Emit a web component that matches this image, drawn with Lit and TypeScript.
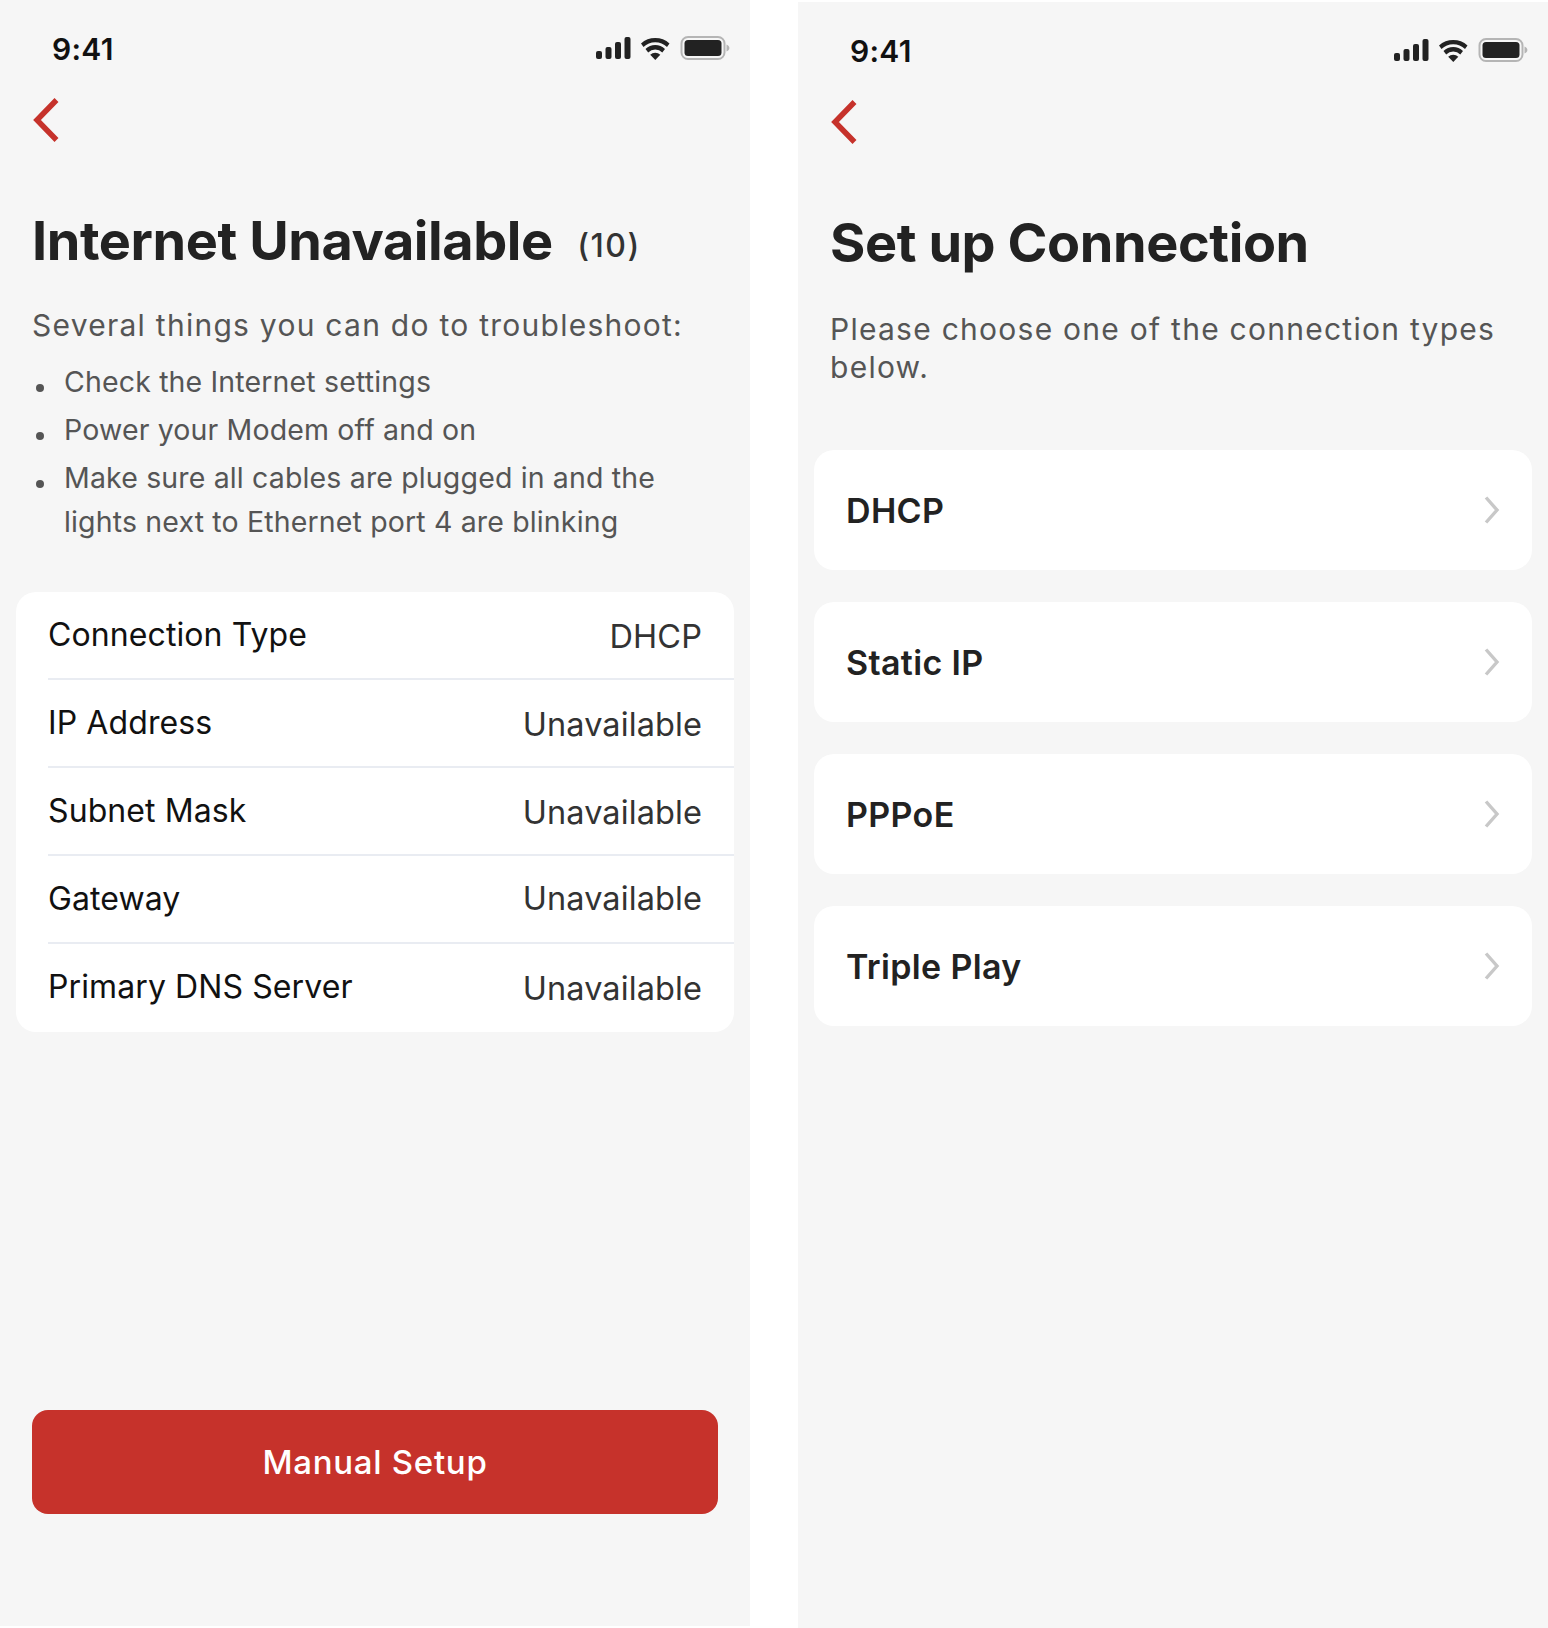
import { LitElement, html, css, svg } from "lit";
import { customElement } from "lit/decorators.js";

const statusIcons = html`
  <svg class="status-icons" width="134" height="26" viewBox="0 0 134 26">
    <g fill="#222">
      <rect x="0" y="15" width="6" height="8" rx="2"/>
      <rect x="9.5" y="11" width="6" height="12" rx="2"/>
      <rect x="19" y="6" width="6" height="17" rx="2"/>
      <rect x="28.5" y="1" width="6" height="22" rx="2"/>
      <path d="M45 7.5 A 21 21 0 0 1 73.5 7.5 L 71 11 A 17 17 0 0 0 47.5 11 Z"/>
      <path d="M49.5 13 A 14 14 0 0 1 69 13 L 66.3 16.4 A 10 10 0 0 0 52.2 16.4 Z"/>
      <path d="M54.2 18.8 A 7 7 0 0 1 64.3 18.8 L 59.3 24 Z"/>
    </g>
    <rect x="85.5" y="1" width="43" height="22" rx="6.5" fill="none" stroke="#b5b5b5" stroke-width="2"/>
    <rect x="88.5" y="4" width="37" height="16" rx="3.5" fill="#222"/>
    <path d="M130.5 8.5 C132.5 9.5 133.4 10.6 133.4 12 C133.4 13.4 132.5 14.5 130.5 15.5 Z" fill="#b5b5b5"/>
  </svg>
`;

const statusBar = html`
  <div class="status">
    <span class="time">9:41</span>
    ${statusIcons}
  </div>
`;

const back = html`
  <div class="back">
    <svg width="28" height="44" viewBox="0 0 28 44">
      <path d="M24.5 2 L5 22 L24.5 42" fill="none" stroke="#c6322b" stroke-width="5.5"/>
    </svg>
  </div>
`;

const chevron = svg`<path d="M2 1.5 L13 14 L2 26.5" fill="none" stroke="#c8c8c8" stroke-width="3.4"/>`;

const info: [string, string, boolean][] = [
  ["Connection Type", "DHCP", false],
  ["IP Address", "Unavailable", false],
  ["Subnet Mask", "Unavailable", false],
  ["Gateway", "Unavailable", true],
  ["Primary DNS Server", "Unavailable", false],
];

@customElement("app-root")
export class AppRoot extends LitElement {
  static styles = css`
    :host {
      display: flex;
      gap: 48px;
      width: 1548px;
      height: 1628px;
      background: #fff;
      font-family: Inter, "Liberation Sans", sans-serif;
      overflow: hidden;
    }
    .panel {
      width: 750px;
      height: 1626px;
      background: #f6f6f6;
      display: flex;
      flex-direction: column;
      flex: none;
    }
    .panel.right {
      margin-top: 2px;
    }
    .status {
      height: 50px;
      margin-top: 24px;
      padding: 0 20px 0 52px;
      display: flex;
      justify-content: space-between;
      align-items: center;
    }
    .time {
      font-size: 30px;
      font-weight: 600;
      color: #111;
      letter-spacing: 0.3px;
    }
    .status-icons {
      display: block;
    }
    .back {
      height: 44px;
      margin-top: 24px;
      padding-left: 32px;
    }
    .back svg {
      display: block;
    }
    h1 {
      margin: 65px 0 0;
      padding-left: 32px;
      font-size: 54px;
      line-height: 68px;
      font-weight: 700;
      color: #222;
      letter-spacing: -0.42px;
      white-space: nowrap;
    }
    h1 small {
      font-size: 32px;
      line-height: 1;
      font-weight: 500;
      margin-left: 12px;
      letter-spacing: 1.5px;
      vertical-align: 3px;
      color: #333;
    }
    .lead {
      margin: 31px 32px 0;
      font-size: 30px;
      line-height: 38px;
      color: #555;
      letter-spacing: 1.26px;
    }
    ul {
      list-style: none;
      margin: 16px 32px 0;
      padding: 0;
      display: flex;
      flex-direction: column;
      gap: 4px;
      font-size: 28.5px;
      letter-spacing: 0.15px;
      line-height: 44px;
      color: #555;
    }
    li {
      position: relative;
      padding-left: 32px;
    }
    li::before {
      content: "";
      position: absolute;
      left: 4px;
      top: 24px;
      width: 8px;
      height: 8px;
      border-radius: 50%;
      background: #555;
    }
    .info {
      margin: 48px 16px 0;
      background: #fff;
      border-radius: 20px;
      overflow: hidden;
    }
    .row {
      margin-left: 32px;
      padding-right: 32px;
      height: 88px;
      display: flex;
      justify-content: space-between;
      align-items: center;
      font-size: 32px;
      letter-spacing: 0.1px;
      box-shadow: 0 -2px 0 #e9ecf2;
    }
    .row:first-child {
      box-shadow: none;
    }
    .row .k {
      color: #111;
      padding-bottom: 4px;
    }
    .row .v {
      color: #333;
      font-size: 32.5px;
    }
    .row .v.raised {
      padding-bottom: 4px;
    }
    .spacer {
      flex: 1;
    }
    .btn {
      margin: 0 32px 112px;
      height: 104px;
      border-radius: 16px;
      background: #c6322b;
      color: #fff;
      font-size: 33px;
      font-weight: 500;
      display: flex;
      align-items: center;
      justify-content: center;
      letter-spacing: 0.7px;
    }
    .right .lead {
      margin-top: 33px;
    }
    .options {
      margin: 64px 16px 0;
      display: flex;
      flex-direction: column;
      gap: 32px;
    }
    .opt {
      height: 120px;
      background: #fff;
      border-radius: 20px;
      padding: 0 32px;
      display: flex;
      align-items: center;
      justify-content: space-between;
      font-size: 34px;
      font-weight: 600;
      color: #222;
      letter-spacing: 0.35px;
    }
    .opt svg {
      display: block;
    }
  `;

  render() {
    return html`
      <section class="panel">
        ${statusBar} ${back}
        <h1>Internet Unavailable <small>(10)</small></h1>
        <p class="lead">Several things you can do to troubleshoot:</p>
        <ul>
          <li>Check the Internet settings</li>
          <li>Power your Modem off and on</li>
          <li>Make sure all cables are plugged in and the lights next to Ethernet port 4 are blinking</li>
        </ul>
        <div class="info">
          ${info.map(
            ([k, v, raised]) =>
              html`<div class="row"><span class="k">${k}</span><span class="v ${raised ? "raised" : ""}">${v}</span></div>`
          )}
        </div>
        <div class="spacer"></div>
        <div class="btn">Manual Setup</div>
      </section>
      <section class="panel right">
        ${statusBar} ${back}
        <h1>Set up Connection</h1>
        <p class="lead">Please choose one of the connection types below.</p>
        <div class="options">
          ${["DHCP", "Static IP", "PPPoE", "Triple Play"].map(
            (o) => html`<div class="opt"><span>${o}</span>
              <svg width="16" height="28" viewBox="0 0 16 28">${chevron}</svg></div>`
          )}
        </div>
      </section>
    `;
  }
}
